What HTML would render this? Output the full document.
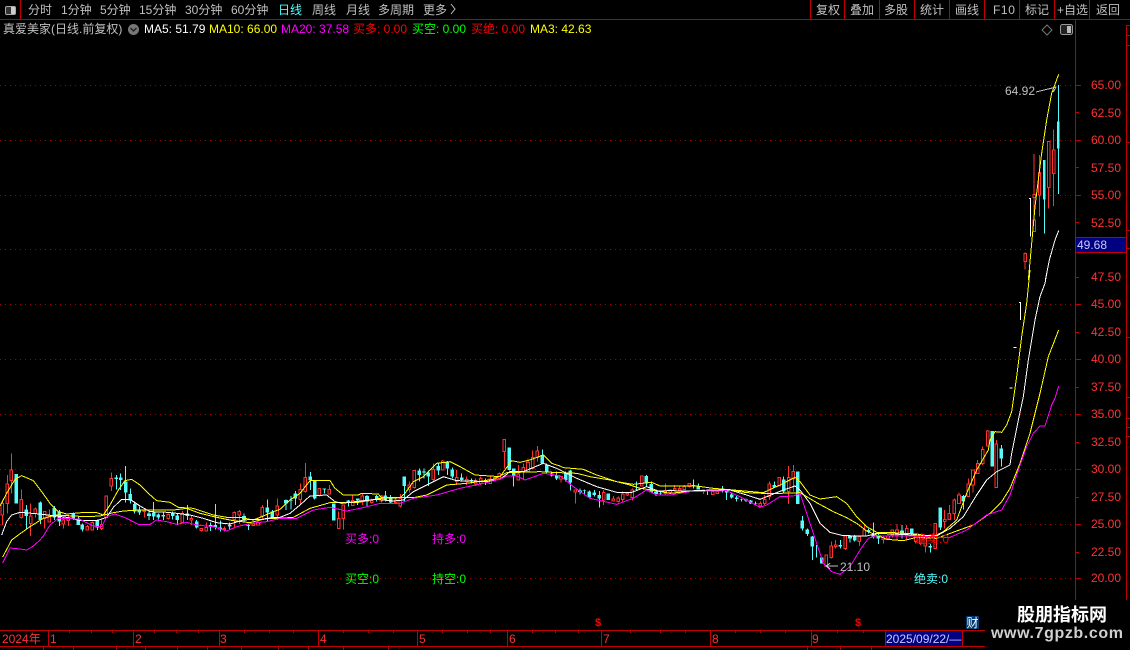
<!DOCTYPE html>
<html><head><meta charset="utf-8"><style>
html,body{margin:0;padding:0;background:#000;}
body{width:1130px;height:650px;overflow:hidden;position:relative;font-family:"Liberation Sans","Noto Sans CJK SC",sans-serif;font-size:12px;}
.t{position:absolute;white-space:nowrap;line-height:14px;height:14px;}
.g{color:#c0c0c0}.w{color:#fff}.y{color:#ff0}.m{color:#f0f}.r{color:#f00}.l{color:#0f0}.c{color:#54fcfc}.p{color:#ff3232}
svg{position:absolute;left:0;top:0;}
.rw{stroke:#ff3232;stroke-width:3;fill:none}
.rb{stroke:#ff3232;stroke-width:3;fill:#000}
.cw{stroke:#54fcfc;stroke-width:3;fill:none}
.cb{stroke:#54fcfc;stroke-width:11;fill:none}
.a{stroke:#fff;stroke-width:3;fill:none}
.b{stroke:#ff0;stroke-width:3;fill:none}
.d{stroke:#f0f;stroke-width:3;fill:none}
</style></head><body>
<svg width="1130" height="650" viewBox="0 0 1130 650" shape-rendering="crispEdges">
<g stroke="#a00000" stroke-width="1" stroke-dasharray="1 4" fill="none">
<path d="M0 85.5H1075M0 140.5H1075M0 195.5H1075M0 249.5H1075M0 304.5H1075M0 359.5H1075M0 414.5H1075M0 469.5H1075M0 524.5H1075M0 578.5H1075"/>
</g>
<g stroke="#c00000" stroke-width="1" fill="none">
<path d="M0 19.5H1130M20.5 0V19M810.5 0V19M844.5 0V19M879.5 0V19M914.5 0V19M949.5 0V19M984.5 0V19M1019.5 0V19M1054.5 0V19M1089.5 0V19"/>
<path d="M1075.5 20V600M1126.5 25V600M1126 25.5H1130M1126 35.5H1130M1126 45.5H1130M1126 142.5H1130M1126 230.5H1130M1126 248.5H1130M1126 337.5H1130M1126 397.5H1130M1126 418.5H1130M1126 427.5H1130M1126 436.5H1130"/>
<path d="M1075 85.5H1081M1075 112.5H1079M1075 140.5H1081M1075 167.5H1079M1075 195.5H1081M1075 222.5H1079M1075 277.5H1079M1075 304.5H1081M1075 332.5H1079M1075 359.5H1081M1075 387.5H1079M1075 414.5H1081M1075 442.5H1079M1075 469.5H1081M1075 497.5H1079M1075 524.5H1081M1075 552.5H1079M1075 578.5H1081"/>
<path d="M0 630.5H985M0 646.5H985M48.5 630V646M133.5 630V646M219.5 630V646M318.5 630V646M417.5 630V646M507.5 630V646M601.5 630V646M710.5 630V646M811.5 630V646M885.5 630V646M962.5 630V646"/>
<path d="M69.5 630V633M91.5 630V633M112.5 630V633M154.5 630V633M176.5 630V633M198.5 630V633M244.5 630V633M269.5 630V633M293.5 630V633M343.5 630V633M368.5 630V633M393.5 630V633M442.5 630V633M467.5 630V633M490.5 630V633M532.5 630V633M555.5 630V633M578.5 630V633M630.5 630V633M660.5 630V633M685.5 630V633M735.5 630V633M760.5 630V633M785.5 630V633M837.5 630V633M863.5 630V633"/>
<path d="M43.5 647V650M73.5 647V650M116.5 647V650M145.5 647V650M177.5 647V650M207.5 647V650M241.5 647V650M278.5 647V650M308.5 647V650M343.5 647V650M388.5 647V650M807.5 647V650M840.5 647V650M871.5 647V650"/>
</g>
</svg>
<svg width="1130" height="650" viewBox="0 0 3390 1950" shape-rendering="crispEdges">
<g transform="translate(0 1290)">
<path class="rw" d="M7 213V285M22 135V250M34 70V190M64 178V265M92 220V318M106 232V262M134 243V295M148 238V276M190 262V295M205 258V288M262 285V302M277 275V300M305 265V300M319 198V262M334 127V183M433 240V262M505 250V268M547 243V280M574 258V285M604 295V305M619 278V305M673 290V305M703 245V295M718 240V282M760 280V286M774 262V285M787 225V270M832 205V270"/>
<path class="rb" d="M7 220m-4 0h8V255h-8zM22 162m-4 0h8V220h-8zM34 120m-4 0h8V152h-4h-4zM64 208m-4 0h8V263h-8zM92 258m-4 0h8V280h-8zM106 237m-4 0h8V250h-8zM134 245m-4 0h8V265h-8zM148 258m-4 0h8V276h-8zM190 270m-4 0h8V282h-8zM205 263m-4 0h8V272h-8zM262 289m-4 0h8V300h-8zM277 278m-4 0h8V300h-8zM305 283m-4 0h8V296h-8zM319 198m-4 0h8V262h-8zM334 145m-4 0h8V168h-8zM433 242m-4 0h8V245h-8zM505 253m-4 0h8V265h-8zM547 250m-4 0h8V278h-8zM574 265m-4 0h8V270h-8zM604 296m-4 0h8V301h-8zM619 292m-4 0h8V303h-8zM673 295m-4 0h8V298h-8zM703 247m-4 0h8V268h-8zM718 245m-4 0h8V255h-8zM760 282m-4 0h8V286h-8zM774 278m-4 0h8V285h-8zM787 232m-4 0h8V258h-8zM832 228m-4 0h8V255h-8z"/>
<path class="cw" d="M79 225V295M121 215V282M163 228V270M178 240V288M220 248V270M235 258V285M247 280V305M292 268V300M349 135V178M362 130V180M377 108V218M391 175V220M404 215V250M418 230V255M447 245V270M461 216V270M475 250V268M490 245V270M518 245V268M532 252V285M562 225V270M590 270V295M632 278V303M646 222V298M661 272V305M689 278V298M732 250V275M745 280V300M802 208V275M817 240V265"/>
<path class="cb" d="M49 132V220M79 238V258M121 218V270M163 234V262M178 245V275M220 252V265M235 265V285M247 284V298M292 271V292M349 143V147M362 143V150M377 155V188M391 192V212M404 222V245M418 238V248M447 250V258M461 248V260M475 254V262M490 255V260M518 250V258M532 257V270M562 250V258M590 275V292M632 285V288M646 285V292M661 292V298M689 285V290M732 258V268M745 285V288M802 232V248M817 245V262"/>
</g>
<g transform="translate(840 1290)">
<path class="rw" d="M61 160V225M76 99V188M118 175V200M148 165V192M176 245V296M190 225V298M218 195V228M247 190V225M275 205V220M304 195V218M347 205V220M361 192V232M388 155V188M403 120V175M460 100V155M488 90V120M530 120V165M560 140V165M587 145V168M602 140V165M631 140V162M645 140V155M658 128V150M673 28V115M715 105V150M730 100V150M744 85V125M758 62V118M772 48V95"/>
<path class="rb" d="M61 178m-4 0h8V208h-8zM76 142m-4 0h8V185h-8zM118 175m-4 0h8V197h-8zM148 178m-4 0h8V192h-8zM176 265m-4 0h8V296h-8zM190 225m-4 0h8V265h-8zM218 212m-4 0h8V227h-8zM247 198m-4 0h8V212h-8zM275 212m-4 0h8V218h-8zM304 198m-4 0h8V213h-8zM347 210m-4 0h8V217h-8zM361 205m-4 0h8V228h-8zM388 165m-4 0h8V178h-8zM403 122m-4 0h8V172h-8zM460 118m-4 0h8V148h-8zM488 93m-4 0h8V120h-8zM530 142m-4 0h8V155h-8zM560 148m-4 0h8V155h-8zM587 152m-4 0h8V162h-8zM602 145m-4 0h8V160h-8zM631 147m-4 0h8V160h-8zM645 142m-4 0h8V150h-8zM658 130m-4 0h8V145h-8zM673 28m-4 0h8V65h-8zM715 132m-4 0h8V150h-8zM730 112m-4 0h8V125h-8zM744 98m-4 0h8V125h-8zM758 82m-4 0h8V115h-8zM772 63m-4 0h8V82h-8z"/>
<path class="cw" d="M18 208V240M33 198V238M46 183V225M91 126V180M104 150V208M133 175V190M161 220V272M205 210V230M233 205V225M261 195V228M290 195V215M316 183V215M332 195V220M373 140V213M418 115V155M432 115V145M445 122V168M475 100V135M502 93V135M517 113V145M545 130V155M574 145V160M617 145V165M688 52V122M701 115V170M787 58V100M800 100V130M815 125V140M830 125V150"/>
<path class="cb" d="M18 210V220M33 210V212M46 190V205M91 140V150M104 152V205M133 175V178M161 220V272M205 212V218M233 205V212M261 198V215M290 198V205M316 196V210M332 205V218M373 140V168M418 122V135M432 125V128M445 128V140M475 108V122M502 95V115M517 118V140M545 142V150M574 150V153M617 150V155M688 52V120M701 115V138M787 75V100M800 105V125M815 130V137M830 137V145"/>
</g>
<g transform="translate(1500 1290)">
<path class="rw" d="M183 140V158M226 180V220M311 180V225M340 198V213M355 200V218M368 185V215M382 188V198M397 175V212M425 138V170M496 160V195M511 178V190M524 165V185M539 170V182M553 165V180M568 160V172M610 178V192M638 178V195M652 182V192M781 215V232M794 195V225M808 155V210M838 142V170M866 108V222M880 105V185"/>
<path class="rb" d="M183 140m-4 0h8V147h-8zM226 180m-4 0h8V186h-8zM311 188m-4 0h8V210h-8zM340 207m-4 0h8V213h-8zM355 204m-4 0h8V215h-8zM368 192m-4 0h8V208h-8zM382 190m-4 0h8V195h-8zM397 180m-4 0h8V203h-8zM425 138m-4 0h8V168h-8zM496 182m-4 0h8V190h-8zM511 180m-4 0h8V187h-8zM524 175m-4 0h8V180h-8zM539 175m-4 0h8V180h-8zM553 170m-4 0h8V178h-8zM568 160m-4 0h8V170h-8zM610 180m-4 0h8V185h-8zM638 184m-4 0h8V193h-8zM652 184m-4 0h8V190h-8zM781 220m-4 0h8V228h-8zM794 208m-4 0h8V220h-8zM808 162m-4 0h8V200h-8zM838 142m-4 0h8V168h-8zM866 142m-4 0h8V185h-8zM880 125m-4 0h8V145h-8z"/>
<path class="cw" d="M197 125V155M211 120V182M240 175V193M253 178V195M268 182V203M283 180V200M298 183V233M325 190V210M410 155V182M439 135V170M454 155V188M468 180V198M481 186V195M580 148V175M595 160V178M623 180V195M667 168V188M680 178V210M695 190V205M710 198V215M725 205V215M738 205V216M752 210V222M767 215V225M823 155V172M851 140V188M893 125V222"/>
<path class="cb" d="M197 130V150M211 122V158M240 182V186M253 182V183M268 184V203M283 188V195M298 195V205M325 190V210M410 178V180M439 138V160M454 162V188M468 185V192M481 190V192M580 165V170M595 168V178M623 182V184M667 178V182M680 180V188M695 193V203M710 202V207M725 208V210M738 208V212M752 212V220M767 220V222M823 165V172M851 148V185M893 125V222"/>
</g>
<g transform="translate(2280 1350)">
<path class="rw" d="M199 315V350M214 275V325M227 270V295M256 258V300M298 258V288M313 225V258M370 258V280M384 255V270M397 238V262M411 222V270M440 225V270M467 255V280M482 255V285M496 260V308M526 220V295M554 180V235M568 165V210M583 145V210M597 128V162"/>
<path class="rb" d="M199 315m-4 0h8V350h-8zM214 288m-4 0h8V322h-8zM227 285m-4 0h8V290h-8zM256 258m-4 0h8V295h-8zM298 260m-4 0h8V275h-8zM313 240m-4 0h8V258h-8zM370 262m-4 0h8V268h-8zM384 258m-4 0h8V265h-8zM397 240m-4 0h8V255h-8zM411 240m-4 0h8V255h-8zM440 235m-4 0h8V255h-8zM467 258m-4 0h8V275h-8zM482 258m-4 0h8V280h-8zM496 265m-4 0h8V288h-8zM526 220m-4 0h8V295h-8zM554 208m-4 0h8V215h-8zM568 190m-4 0h8V208h-8zM583 150m-4 0h8V190h-8zM597 135m-4 0h8V160h-8z"/>
<path class="cw" d="M113 67V160M127 198V242M142 235V258M157 258V330M170 285V322M185 322V340M241 270V295M270 255V278M284 255V275M326 235V250M340 218V265M355 250V282M426 225V265M455 235V258M511 282V308M541 172V240"/>
<path class="cb" d="M127 212V235M142 238V252M157 260V290M185 322V340M241 285V290M270 257V265M284 260V272M326 240V245M340 255V260M355 258V265M426 242V255M455 235V250M511 288V292M541 172V232"/>
</g>
<g transform="translate(2880 810)">
<path class="rw" d="M25 625V680M39 600V668M53 570V610M68 530V585M83 480V530M109 510V652"/>
<path class="rb" d="M25 642m-4 0h8V680h-8zM39 600m-4 0h8V645h-8zM53 580m-4 0h8V610h-8zM68 538m-4 0h8V580h-8zM83 483m-4 0h8V528h-8zM109 522m-4 0h8V652h-8z"/>
<path class="cw" d="M10 675V718M124 525V590"/>
<path class="cb" d="M10 678V695M97 483V590M124 535V565"/>
<path stroke="#fff" stroke-width="3" fill="none" d="M148 354H157M161 232H169M177 98H183M181 98V150"/>
</g>
<g transform="translate(2880 180)">
<path class="rw" d="M195 578V628M222 282V515M238 285V470M266 245V445M281 208V438"/>
<path class="rb" d="M195 580m-3 0h7V605h-7zM222 403m-3 0h7V413h-7zM222 480m-3 0h7V515h-7zM238 338m-3 0h7V405h-7zM266 245m-3 0h7V382h-7zM281 270m-3 0h7V340h-7z"/>
<path stroke="#fff" stroke-width="3" fill="none" d="M207 415H213M211 415V530"/>
<path class="cw" d="M253 300V520M295 75V402"/>
<path class="cb" d="M253 300V418M295 185V265" style="stroke-width:8"/>
</g>
<!-- MA3 -->
<g>
<polyline class="b" transform="translate(0 1290)" points="8,381 35,330 55,315 90,290 130,265 170,255 220,258 260,260 300,258 340,248 370,243 420,240 470,240 520,240 560,235 600,250 650,262 700,272 750,278 800,265 840,265"/>
<polyline class="b" transform="translate(840 1290)" points="0,265 40,262 90,235 150,218 230,218 300,205 360,203 400,203 440,195 500,165 560,160 640,148 680,128 780,125 840,128"/>
<polyline class="b" transform="translate(1500 1290)" points="180,128 230,130 270,140 330,150 390,165 420,175 455,180 510,190 580,183 640,182 690,180 740,188 790,190 840,190 900,188"/>
<polyline class="b" transform="translate(2280 1350)" points="120,128 170,158 220,185 260,203 290,220 320,243 380,268 430,272 470,262 530,265 590,243 640,225 690,190 725,155 750,115"/>
<polyline class="b" transform="translate(2880 810)" points="150,655 180,580 210,490 240,370 265,260 296,180"/>
</g>
<!-- MA10 -->
<g>
<polyline class="b" transform="translate(0 1290)" points="0,228 20,190 45,148 65,137 100,152 125,185 150,220 175,245 200,252 255,247 290,248 310,255 330,225 355,180 375,152 395,148 420,165 445,190 470,212 510,217 535,232 580,235 610,245 640,255 680,262 720,262 760,270 790,258 820,245 840,238"/>
<polyline class="b" transform="translate(840 1290)" points="0,238 30,210 60,190 90,152 150,152 165,175 190,195 235,195 245,190 295,192 305,203 360,203 375,190 400,155 430,140 470,100 510,95 540,110 585,135 660,140 695,92 720,97 750,90 790,75 815,100 840,108"/>
<polyline class="b" transform="translate(1500 1290)" points="180,108 190,113 250,118 290,135 350,155 400,163 455,157 480,168 590,168 640,175 700,180 790,188 840,165 885,142 900,155"/>
<polyline class="b" transform="translate(2280 1350)" points="120,95 150,135 180,147 230,140 260,160 290,200 320,230 350,247 400,248 470,252 520,260 550,245 590,210 620,130 650,60 685,0"/>
<polyline class="b" transform="translate(2880 810)" points="85,540 90,510 105,485 125,487 140,465 155,425 170,320 185,200 200,100 210,0"/>
<polyline class="b" transform="translate(2880 180)" points="205,660 215,550 225,440 245,280 260,180 275,100 296,43"/>
</g>
<!-- MA5 -->
<g>
<polyline class="a" transform="translate(0 1290)" points="5,315 20,275 35,255 60,247 120,252 160,257 200,262 240,272 290,272 320,262 340,232 365,208 390,208 420,228 450,245 490,246 530,250 570,255 610,265 650,278 690,282 730,270 760,268 790,268 820,262 840,262"/>
<polyline class="a" transform="translate(840 1290)" points="0,262 30,250 60,225 90,198 140,195 165,215 185,220 225,215 290,208 340,213 370,210 400,185 440,165 490,140 530,152 570,153 620,155 660,148 690,125 730,125 790,100 830,115 840,120"/>
<polyline class="a" transform="translate(1500 1290)" points="180,120 230,145 290,170 350,187 395,187 440,170 475,183 510,182 560,183 640,180 690,180 740,195 780,208 820,192 850,180 885,168 900,180"/>
<polyline class="a" transform="translate(2280 1350)" points="120,120 150,160 180,220 210,247 250,257 320,258 350,250 400,252 460,255 530,258 570,235 610,200 650,135 680,90 710,65 750,45"/>
<polyline class="a" transform="translate(2880 810)" points="150,585 155,550 175,450 190,380 205,270 225,150 240,80 255,40 262,0"/>
<polyline class="a" transform="translate(2880 180)" points="256,660 268,600 285,540 296,512"/>
</g>
<!-- MA20 -->
<g>
<polyline class="d" transform="translate(0 1290)" points="8,399 30,354 60,357 80,360 100,348 120,330 130,318 150,285 175,265 200,265 240,268 280,288 305,290 320,260 345,252 375,263 415,283 450,283 470,270 500,275 530,283 560,277 590,285 640,290 680,303 710,290 740,283 770,278 800,275 840,265"/>
<polyline class="d" transform="translate(840 1290)" points="0,265 50,265 100,240 150,232 200,243 240,235 300,220 360,220 400,205 470,195 540,175 610,160 660,148 680,138 710,138 735,150 790,130 840,137"/>
<polyline class="d" transform="translate(1500 1290)" points="180,137 220,170 270,205 350,223 400,205 440,180 470,195 510,195 570,185 680,182 730,205 780,232 800,225 840,200 880,198 900,190"/>
<polyline class="d" transform="translate(2280 1350)" points="120,130 140,190 170,280 190,340 215,365 240,373 270,350 300,300 325,265 350,257 400,258 470,258 530,262 570,262 620,240 680,195 725,180 750,135"/>
<polyline class="d" transform="translate(2880 810)" points="150,675 175,600 200,530 220,490 240,468 255,468 275,405 285,385 296,348"/>
</g>
<path stroke="#c0c0c0" stroke-width="3" fill="none" d="M3108 276L3168 261M3146 267L3168 261L3160 276M2478 1698H2514M2478 1698L2490 1690M2478 1698L2490 1706"/>
</svg>
<svg width="1130" height="650" style="pointer-events:none">
<rect x="5.5" y="6.5" width="10" height="8" rx="1.5" fill="#333" stroke="#aaa"/><rect x="11" y="7" width="4" height="7" fill="#ccc"/>
<circle cx="133.500" cy="29.500" r="5.500" fill="#777"/><path d="M130.500 28l3 3 3-3" stroke="#222" stroke-width="1.500" fill="none"/>
<path d="M1047 25l5 5-5 5-5-5z" fill="none" stroke="#777"/>
<rect x="1060.500" y="24.500" width="12" height="10" rx="2" fill="#222" stroke="#999"/><rect x="1067" y="26" width="4" height="7" fill="#bbb"/>
<path d="M451 4l4 5-4 5" fill="none" stroke="#c0c0c0"/>
</svg>
<div class="t g" style="left:28px;top:3px">分时</div>
<div class="t g" style="left:61px;top:3px">1分钟</div>
<div class="t g" style="left:100px;top:3px">5分钟</div>
<div class="t g" style="left:139px;top:3px">15分钟</div>
<div class="t g" style="left:185px;top:3px">30分钟</div>
<div class="t g" style="left:231px;top:3px">60分钟</div>
<div class="t c" style="left:278px;top:3px">日线</div>
<div class="t g" style="left:312px;top:3px">周线</div>
<div class="t g" style="left:346px;top:3px">月线</div>
<div class="t g" style="left:378px;top:3px">多周期</div>
<div class="t g" style="left:423px;top:3px">更多</div>
<div class="t g" style="left:816px;top:3px">复权</div>
<div class="t g" style="left:850px;top:3px">叠加</div>
<div class="t g" style="left:884px;top:3px">多股</div>
<div class="t g" style="left:920px;top:3px">统计</div>
<div class="t g" style="left:955px;top:3px">画线</div>
<div class="t g" style="left:993px;top:3px;letter-spacing:.6px">F10</div>
<div class="t g" style="left:1025px;top:3px">标记</div>
<div class="t g" style="left:1057px;top:3px">+自选</div>
<div class="t g" style="left:1096px;top:3px">返回</div>
<div class="t g" style="left:3px;top:22px">真爱美家(日线.前复权)</div>
<div class="t w" style="left:144px;top:22px">MA5: 51.79</div>
<div class="t y" style="left:209px;top:22px">MA10: 66.00</div>
<div class="t m" style="left:281px;top:22px">MA20: 37.58</div>
<div class="t r" style="left:353px;top:22px">买多: 0.00</div>
<div class="t l" style="left:412px;top:22px">买空: 0.00</div>
<div class="t r" style="left:471px;top:22px">买绝: 0.00</div>
<div class="t y" style="left:530px;top:22px">MA3: 42.63</div>
<div class="t p" style="left:1091px;top:78px">65.00</div>
<div class="t p" style="left:1091px;top:106px">62.50</div>
<div class="t p" style="left:1091px;top:133px">60.00</div>
<div class="t p" style="left:1091px;top:161px">57.50</div>
<div class="t p" style="left:1091px;top:188px">55.00</div>
<div class="t p" style="left:1091px;top:216px">52.50</div>
<div class="t p" style="left:1091px;top:270px">47.50</div>
<div class="t p" style="left:1091px;top:297px">45.00</div>
<div class="t p" style="left:1091px;top:325px">42.50</div>
<div class="t p" style="left:1091px;top:352px">40.00</div>
<div class="t p" style="left:1091px;top:380px">37.50</div>
<div class="t p" style="left:1091px;top:407px">35.00</div>
<div class="t p" style="left:1091px;top:435px">32.50</div>
<div class="t p" style="left:1091px;top:462px">30.00</div>
<div class="t p" style="left:1091px;top:490px">27.50</div>
<div class="t p" style="left:1091px;top:517px">25.00</div>
<div class="t p" style="left:1091px;top:545px">22.50</div>
<div class="t p" style="left:1091px;top:571px">20.00</div>
<div style="position:absolute;left:1076px;top:237px;width:50px;height:14px;background:#000080;border-top:1px solid #c00000;border-bottom:1px solid #c00000"></div>
<div class="t" style="left:1077px;top:238px;color:#c8c8ff">49.68</div>
<div class="t g" style="left:1005px;top:84px">64.92</div>
<div class="t g" style="left:840px;top:560px">21.10</div>
<div class="t m" style="left:345px;top:532px">买多:0</div>
<div class="t m" style="left:432px;top:532px">持多:0</div>
<div class="t l" style="left:345px;top:572px">买空:0</div>
<div class="t l" style="left:432px;top:572px">持空:0</div>
<div class="t r" style="left:915px;top:532px">绝卖:0</div>
<div class="t c" style="left:914px;top:572px">绝卖:0</div>
<div class="t p" style="left:2px;top:632px">2024年</div>
<div class="t p" style="left:50px;top:632px">1</div>
<div class="t p" style="left:135px;top:632px">2</div>
<div class="t p" style="left:220px;top:632px">3</div>
<div class="t p" style="left:320px;top:632px">4</div>
<div class="t p" style="left:419px;top:632px">5</div>
<div class="t p" style="left:509px;top:632px">6</div>
<div class="t p" style="left:603px;top:632px">7</div>
<div class="t p" style="left:712px;top:632px">8</div>
<div class="t p" style="left:812px;top:632px">9</div>
<div class="t r" style="left:595px;top:616px;font-weight:bold;font-size:11px">$</div>
<div class="t r" style="left:855px;top:616px;font-weight:bold;font-size:11px">$</div>
<div style="position:absolute;left:886px;top:631px;width:76px;height:15px;background:#000080"></div>
<div class="t" style="left:886px;top:632px;color:#c8c8ff">2025/09/22/—</div>
<div class="t w" style="left:966px;top:616px;width:13px;height:13px;background:#003a70;text-align:center;">财</div>
<div style="position:absolute;left:985px;top:600px;width:145px;height:50px;background:#000"></div>
<div class="t w" style="left:1017px;top:604px;font-size:18px;font-weight:bold;line-height:22px;height:22px">股朋指标网</div>
<div class="t" style="left:991px;top:624px;font-size:16px;font-weight:bold;line-height:20px;height:20px;color:#d0d0d0;letter-spacing:.6px">www.7gpzb.com</div>
</body></html>
